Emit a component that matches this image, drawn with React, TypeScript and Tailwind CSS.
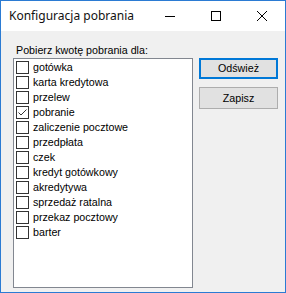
import React from 'react';

const options = [
  { label: 'gotówka', checked: false },
  { label: 'karta kredytowa', checked: false },
  { label: 'przelew', checked: false },
  { label: 'pobranie', checked: true },
  { label: 'zaliczenie pocztowe', checked: false },
  { label: 'przedpłata', checked: false },
  { label: 'czek', checked: false },
  { label: 'kredyt gotówkowy', checked: false },
  { label: 'akredytywa', checked: false },
  { label: 'sprzedaż ratalna', checked: false },
  { label: 'przekaz pocztowy', checked: false },
  { label: 'barter', checked: false },
];

const CheckBox = ({ checked }: { checked: boolean }) => (
  <div className="w-[13px] h-[13px] border border-[#333333] bg-white shrink-0 flex items-center justify-center">
    {checked && (
      <svg width="11" height="11" viewBox="0 0 11 11">
        <path d="M1.5 5.5 L4 8 L9.5 2.5" fill="none" stroke="#333" strokeWidth="1" />
      </svg>
    )}
  </div>
);

const App = () => {
  return (
    <div
      className="w-[286px] h-[293px] border border-[#2b7bd3] bg-[#f0f0f0] flex flex-col text-black"
      style={{ fontFamily: '"Liberation Sans", Arial, sans-serif' }}
    >
      {/* title bar */}
      <div className="h-[30px] bg-white flex items-center shrink-0">
        <div className="pl-[8px] flex-1 text-[12px] text-[#111]" style={{ fontFamily: '"Noto Sans", sans-serif' }}>
          Konfiguracja pobrania
        </div>
        <div className="w-[46px] h-full flex items-center justify-center">
          <svg width="10" height="10" viewBox="0 0 10 10">
            <path d="M0 5.5 H10" stroke="#000" strokeWidth="1" />
          </svg>
        </div>
        <div className="w-[46px] h-full flex items-center justify-center">
          <svg width="10" height="10" viewBox="0 0 10 10">
            <rect x="0.5" y="0.5" width="9" height="9" fill="none" stroke="#000" strokeWidth="1" />
          </svg>
        </div>
        <div className="w-[46px] h-full flex items-center justify-center">
          <svg width="10" height="10" viewBox="0 0 10 10">
            <path d="M0 0 L10 10 M10 0 L0 10" stroke="#000" strokeWidth="1" />
          </svg>
        </div>
      </div>

      {/* body */}
      <div className="flex-1 flex pl-[12px] pr-[7px] pt-[11px] pb-[4px] gap-[6px] text-[10.7px]">
        <div className="flex flex-col flex-1">
          <div className="pl-[3px] h-[16px] leading-[16px]">Pobierz kwotę pobrania dla:</div>
          <div className="flex-1 border border-[#828790] bg-white pt-[1px] pl-[2px]">
            {options.map((o, i) => (
              <div key={i} className="h-[15px] flex items-center gap-[4px]">
                <CheckBox checked={o.checked} />
                <span>{o.label}</span>
              </div>
            ))}
          </div>
        </div>
        <div className="w-[79px] flex flex-col gap-[8px] pt-[16px]">
          <button className="h-[21px] bg-[#e1e1e1] border-2 border-[#0078d7] text-[10.7px] flex items-center justify-center">
            Odśwież
          </button>
          <button className="h-[22px] bg-[#e1e1e1] border border-[#adadad] text-[10.7px] flex items-center justify-center">
            Zapisz
          </button>
        </div>
      </div>
    </div>
  );
};

export default App;
